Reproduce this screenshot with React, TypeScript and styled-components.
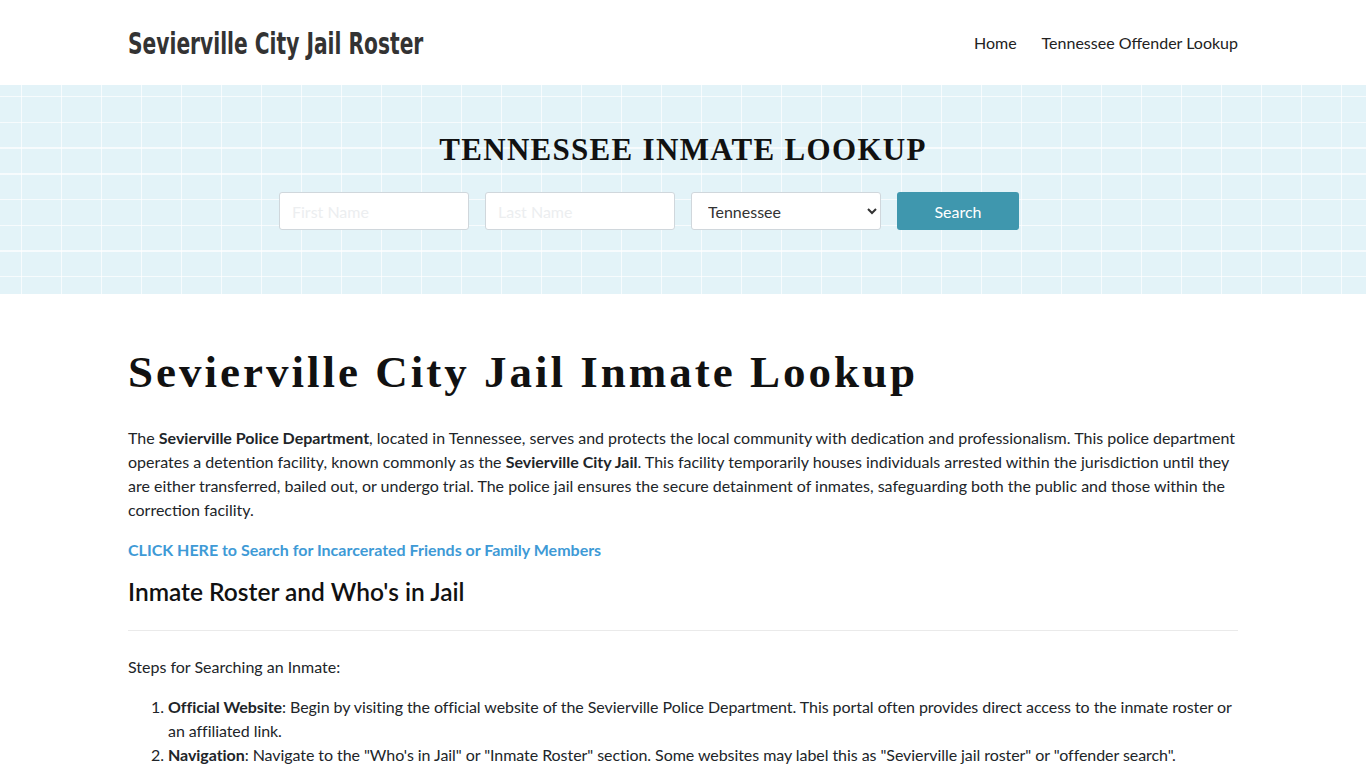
import React from "react";
import styled, { createGlobalStyle } from "styled-components";

const GlobalStyle = createGlobalStyle`
  html, body {
    margin: 0;
    padding: 0;
    background: #fff;
  }
  body {
    font-family: Lato, "Open Sans", sans-serif;
    color: #212529;
    font-size: 16px;
  }
  * {
    box-sizing: border-box;
  }
`;

const Container = styled.div`
  width: 1110px;
  margin: 0 auto;
`;

const Header = styled.header`
  height: 85px;
  background: #fff;
`;

const HeaderInner = styled(Container)`
  display: flex;
  align-items: center;
  justify-content: space-between;
  height: 100%;
`;

const Brand = styled.a`
  font-family: "DejaVu Sans Condensed", "Roboto", sans-serif;
  font-weight: 700;
  font-size: 31px;
  color: #333;
  text-decoration: none;
  white-space: nowrap;
  transform: scaleX(0.725);
  transform-origin: left center;
`;

const Nav = styled.nav`
  display: flex;
  gap: 25px;
`;

const NavLink = styled.a`
  font-size: 16px;
  color: #222;
  text-decoration: none;
`;

const Hero = styled.section`
  height: 209px;
  background-color: #e3f3f8;
  background-image:
    repeating-linear-gradient(
      90deg,
      transparent 0px,
      transparent 21px,
      rgba(255, 255, 255, 0.7) 21px,
      rgba(255, 255, 255, 0.7) 22.5px,
      transparent 22.5px,
      transparent 40px
    ),
    repeating-linear-gradient(
      180deg,
      transparent 0px,
      transparent 11px,
      rgba(255, 255, 255, 0.7) 11px,
      rgba(255, 255, 255, 0.7) 12.5px,
      transparent 12.5px,
      transparent 25.7px
    );
  display: flex;
  flex-direction: column;
  align-items: center;
  padding-top: 47px;
`;

const HeroTitle = styled.h2`
  margin: 0 0 24px;
  font-family: "Liberation Serif", "DejaVu Serif", serif;
  font-weight: 700;
  font-size: 31px;
  line-height: 36px;
  letter-spacing: 1.3px;
  color: #111;
`;

const SearchForm = styled.form`
  display: flex;
  gap: 16px;
  margin-right: 68px;
`;

const Field = styled.input`
  width: 190px;
  height: 38px;
  border: 1px solid #d0d7dc;
  border-radius: 3px;
  background: #fff;
  padding: 0 12px;
  font-family: Lato, sans-serif;
  font-size: 16px;
  color: #333;
  &::placeholder {
    color: #eceef0;
  }
`;

const Select = styled.select`
  width: 190px;
  height: 38px;
  border: 1px solid #d0d7dc;
  border-radius: 3px;
  background: #fff;
  padding: 0 12px;
  font-family: Lato, sans-serif;
  font-size: 16px;
  color: #333;
`;

const Button = styled.button`
  width: 122px;
  height: 38px;
  border: none;
  border-radius: 3px;
  background: #3f97ae;
  color: #fff;
  font-family: Lato, sans-serif;
  font-size: 16px;
`;

const Main = styled(Container)`
  padding-top: 52px;
`;

const Title = styled.h1`
  margin: 0 0 28px;
  font-family: "Liberation Serif", "DejaVu Serif", serif;
  font-weight: 700;
  font-size: 45px;
  line-height: 52px;
  letter-spacing: 3px;
  color: #111;
`;

const Para = styled.p`
  margin: 0 0 16px;
  font-size: 16px;
  line-height: 24px;
  color: #212529;
  strong {
    font-weight: 700;
  }
`;

const Link = styled.a`
  display: block;
  margin: 0 0 14px;
  font-weight: 700;
  font-size: 16px;
  line-height: 24px;
  color: #3e9ad6;
  text-decoration: none;
`;

const SubTitle = styled.h3`
  margin: 0;
  font-weight: 600;
  font-size: 24.5px;
  line-height: 32px;
  color: #111;
`;

const Rule = styled.hr`
  margin: 22px 0 24px;
  border: none;
  border-top: 1px solid #eaeaea;
`;

const Steps = styled.ol`
  margin: 0;
  padding-left: 40px;
  font-size: 16px;
  line-height: 24px;
  letter-spacing: -0.06px;
  color: #212529;
`;

export default function App() {
  return (
    <>
      <GlobalStyle />
      <Header>
        <HeaderInner>
          <Brand href="#">Sevierville City Jail Roster</Brand>
          <Nav>
            <NavLink href="#">Home</NavLink>
            <NavLink href="#">Tennessee Offender Lookup</NavLink>
          </Nav>
        </HeaderInner>
      </Header>
      <Hero>
        <HeroTitle>TENNESSEE INMATE LOOKUP</HeroTitle>
        <SearchForm onSubmit={(e) => e.preventDefault()}>
          <Field placeholder="First Name" />
          <Field placeholder="Last Name" />
          <Select defaultValue="Tennessee">
            <option>Tennessee</option>
          </Select>
          <Button type="submit">Search</Button>
        </SearchForm>
      </Hero>
      <Main>
        <Title>Sevierville City Jail Inmate Lookup</Title>
        <Para>
          The <strong>Sevierville Police Department</strong>, located in Tennessee, serves and protects the local
          community with dedication and professionalism. This police department operates a detention facility, known
          commonly as the <strong>Sevierville City Jail</strong>. This facility temporarily houses individuals arrested
          within the jurisdiction until they are either transferred, bailed out, or undergo trial. The police jail
          ensures the secure detainment of inmates, safeguarding both the public and those within the correction
          facility.
        </Para>
        <Link href="#">CLICK HERE to Search for Incarcerated Friends or Family Members</Link>
        <SubTitle>Inmate Roster and Who's in Jail</SubTitle>
        <Rule />
        <Para>Steps for Searching an Inmate:</Para>
        <Steps>
          <li>
            <strong>Official Website</strong>: Begin by visiting the official website of the Sevierville Police
            Department. This portal often provides direct access to the inmate roster or an affiliated link.
          </li>
          <li>
            <strong>Navigation</strong>: Navigate to the "Who's in Jail" or "Inmate Roster" section. Some websites may
            label this as "Sevierville jail roster" or "offender search".
          </li>
        </Steps>
      </Main>
    </>
  );
}
